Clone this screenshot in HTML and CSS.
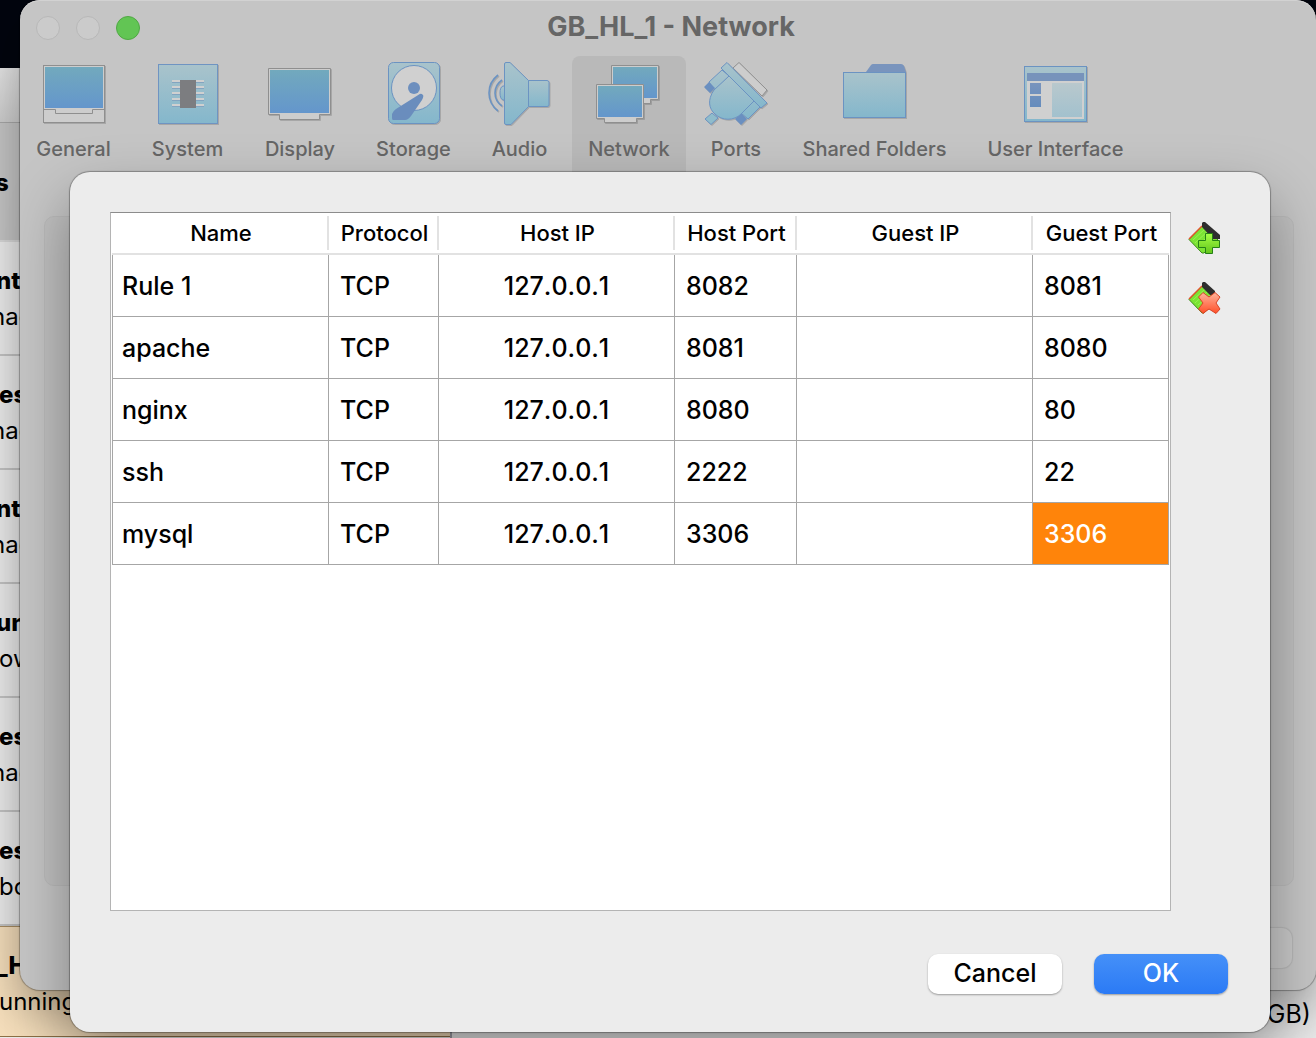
FILE: index.html
```html
<!DOCTYPE html>
<html lang="en">
<head>
<meta charset="utf-8">
<title>GB_HL_1 - Network</title>
<link rel="stylesheet" href="styles.css">
</head>
<body>
<div class="desktop">

  <div class="manager">
    <div class="manager-toolbar"></div>
    <ul class="machines">
      <li class="machine machine-tools"><b>s</b></li>
      <li class="machine"><b>nt</b><span>nac</span></li>
      <li class="machine machine-e"><b>es</b><span>nac</span></li>
      <li class="machine"><b>ntu</b><span>nac</span></li>
      <li class="machine"><b>un</b><span class="flush">ow</span></li>
      <li class="machine machine-e"><b>es</b><span>nac</span></li>
      <li class="machine machine-e"><b>es</b><span class="flush">bo</span></li>
      <li class="machine machine-selected"><b>_H</b><span class="flush">unning</span></li>
    </ul>
    <div class="manager-status">GB)</div>
  </div>

  <div class="settings">
    <header class="titlebar">
      <div class="lights">
        <button class="light" aria-label="Close"></button>
        <button class="light" aria-label="Minimize"></button>
        <button class="light light-zoom" aria-label="Zoom"></button>
      </div>
      <h1 class="title">GB_HL_1 - Network</h1>
    </header>

    <nav class="tabs">
      <button class="tab">
        <svg class="icon" viewBox="0 0 64 64">
          <defs>
            <linearGradient id="screen" x1="0" y1="0" x2="0" y2="1"><stop offset="0" stop-color="#72a9bd"/><stop offset="1" stop-color="#6496cc"/></linearGradient>
            <linearGradient id="pale" x1="0" y1="0" x2="0" y2="1"><stop offset="0" stop-color="#a9c3cb"/><stop offset="1" stop-color="#84b7cc"/></linearGradient>
            <linearGradient id="dark" x1="0" y1="0" x2="0" y2="1"><stop offset="0" stop-color="#7994bd"/><stop offset="1" stop-color="#658cbd"/></linearGradient>
          </defs>
          <rect x="1.5" y="3.5" width="61" height="57" fill="#cdcdcd" stroke="#8f8f8f"/>
          <rect x="3" y="5" width="58" height="41" fill="url(#screen)"/>
          <path d="M2 47.500H13.500V51.500H50.500V47.500H62" fill="none" stroke="#8f8f8f"/>
        </svg>
        <span>General</span>
      </button>
      <button class="tab">
        <svg class="icon" viewBox="0 0 64 64">
          <rect x="2.500" y="2.500" width="59" height="59" fill="url(#pale)" stroke="#6f94c2"/>
          <path d="M16 19H48M16 25H48M16 31H48M16 37H48M16 43H48" stroke="#d0d0d0" stroke-width="2"/>
          <path d="M16 20.500H48M16 26.500H48M16 32.500H48M16 38.500H48M16 44.500H48" stroke="#83a4c0"/>
          <rect x="24" y="18" width="16" height="28" fill="#7c7d80"/>
        </svg>
        <span>System</span>
      </button>
      <button class="tab">
        <svg class="icon" viewBox="0 0 64 64">
          <path d="M.5 6.500H62.500V52.500H51.500V57.500H11.500V52.500H.5Z" fill="#cdcdcd" stroke="#8f8f8f"/>
          <rect x="2" y="8" width="59" height="43" fill="url(#screen)"/>
        </svg>
        <span>Display</span>
      </button>
      <button class="tab">
        <svg class="icon" viewBox="0 0 64 64">
          <rect x="6.500" y=".5" width="51" height="61" rx="5" fill="url(#pale)" stroke="#6b93c2"/>
          <circle cx="32" cy="26" r="22.500" fill="#d0d0d0" stroke="#6b93c2"/>
          <circle cx="32" cy="26" r="6" fill="#6d8fbe"/>
          <path d="M37 32.500Q39 31 41 33Q42 34 40 38L29 54Q26 58 23 58H11Q10 58 10 56V52Q11 49 14 47Z" fill="#6a8dbd"/>
        </svg>
        <span>Storage</span>
      </button>
      <button class="tab">
        <svg class="icon" viewBox="0 0 64 64">
          <path d="M16 24H15Q12 25 12 31Q12 37 15 38H16" fill="url(#pale)" stroke="#6b93c2"/>
          <path d="M10 13Q1 20 1 31T10 49M14 18Q7 23 7 31T14 44" fill="none" stroke="#6b93c2" stroke-width="1.600"/>
          <path d="M18 .5H22L40.500 18.500V44.500L23 62.500H18Q16.500 62.500 16.500 61V2Q16.500 .5 18 .5Z" fill="url(#pale)" stroke="#6b93c2"/>
          <path d="M40.500 18.500H59Q61 18.500 61 20.500V43Q61 44.500 59 44.500H40.500Z" fill="url(#pale)" stroke="#6b93c2"/>
        </svg>
        <span>Audio</span>
      </button>
      <button class="tab tab-current" aria-current="page">
        <svg class="icon" viewBox="0 0 64 64">
          <path d="M14.500 3.500H61.500V37.500H53.500V41.500H30V37.500H14.500Z" fill="#cdcdcd" stroke="#8f8f8f"/>
          <rect x="16" y="5" width="44" height="31" fill="url(#screen)"/>
          <path d="M-.5 22.500H46.500V56.500H39.500V60.500H7.500V56.500H-.5Z" fill="#cdcdcd" stroke="#8f8f8f"/>
          <rect x="1" y="24" width="44" height="31" fill="url(#screen)"/>
        </svg>
        <span>Network</span>
      </button>
      <button class="tab">
        <svg class="icon" viewBox="0 0 64 64" stroke-linejoin="round">
          <path d="M35 .5L63 28L58 34L29 6Z" fill="#cdcdcd" stroke="#8f8f8f"/>
          <path d="M18 8L25 14L11 28L5 20ZM50 39L56 45L44 57L37 51Z" fill="url(#pale)" stroke="#6b93c2"/>
          <path d="M5 20L11 26L6 31L0 25ZM37 51L43 57L37 63L31 57Z" fill="#6a8fc0"/>
          <path d="M25 14L10 28C3 38 5 47 11 52C18 59 30 59 37 52L50 39Z" fill="url(#pale)" stroke="#6b93c2"/>
          <path d="M8 51L14 56L7 62.500L1 57Z" fill="#8fbccb" stroke="#6b93c2"/>
          <path d="M23 .5L63 41L57 46L17 6Z" fill="url(#pale)" stroke="#6b93c2"/>
        </svg>
        <span>Ports</span>
      </button>
      <button class="tab">
        <svg class="icon" viewBox="0 0 64 64">
          <path d="M23 10L28 3Q29 2 30 2H58Q60 2 61 4L63 10Z" fill="#7994bd"/>
          <rect x=".5" y="10.500" width="62" height="45" fill="url(#pale)" stroke="#6b93c2"/>
        </svg>
        <span>Shared Folders</span>
      </button>
      <button class="tab">
        <svg class="icon" viewBox="0 0 64 64">
          <rect x=".5" y="4.500" width="62" height="55" fill="url(#pale)" stroke="#6b93c2"/>
          <rect x="3" y="11" width="57" height="8" fill="#7793bb"/>
          <rect x="3" y="19" width="57" height="38" fill="#d0d0d0"/>
          <path d="M6 21H17V32H6ZM6 34H17V45H6Z" fill="url(#dark)"/>
          <rect x="28" y="21" width="30" height="34" fill="url(#pale)" opacity=".6"/>
        </svg>
        <span>User Interface</span>
      </button>
    </nav>

    <div class="group"></div>
    <div class="settings-actions"><button class="ghost-button" aria-label="OK"></button></div>
  </div>

  <section class="dialog" role="dialog" aria-label="Port forwarding rules">
    <div class="dialog-main">
      <div class="rules-frame">
        <table class="rules">
          <colgroup><col class="c-name"><col class="c-protocol"><col class="c-ip"><col class="c-host-port"><col class="c-ip"><col class="c-guest-port"></colgroup>
          <thead>
            <tr><th><span>Name</span></th><th><span>Protocol</span></th><th><span>Host IP</span></th><th><span>Host Port</span></th><th><span>Guest IP</span></th><th><span>Guest Port</span></th></tr>
          </thead>
          <tbody>
            <tr><td>Rule 1</td><td>TCP</td><td class="ip">127.0.0.1</td><td>8082</td><td class="ip"></td><td>8081</td></tr>
            <tr><td>apache</td><td>TCP</td><td class="ip">127.0.0.1</td><td>8081</td><td class="ip"></td><td>8080</td></tr>
            <tr><td>nginx</td><td>TCP</td><td class="ip">127.0.0.1</td><td>8080</td><td class="ip"></td><td>80</td></tr>
            <tr><td>ssh</td><td>TCP</td><td class="ip">127.0.0.1</td><td>2222</td><td class="ip"></td><td>22</td></tr>
            <tr><td>mysql</td><td>TCP</td><td class="ip">127.0.0.1</td><td>3306</td><td class="ip"></td><td class="selected">3306</td></tr>
          </tbody>
        </table>
      </div>
      <div class="rule-tools">
        <button class="tool" aria-label="Add rule">
          <svg viewBox="0 0 34 34">
            <defs>
              <linearGradient id="green" x1="0" y1="0" x2="0" y2="1"><stop offset="0" stop-color="#a5ff45"/><stop offset="1" stop-color="#63c51c"/></linearGradient>
              <linearGradient id="red" x1="0" y1="0" x2="0" y2="1"><stop offset="0" stop-color="#ffb49c"/><stop offset="1" stop-color="#ff4f28"/></linearGradient>
            </defs>
            <path d="M2 17.500L16 3L31 17L17 31H15Z" fill="#7be334" stroke="#3d8a1b"/>
            <path d="M6 18L18 7M8 21L21 9M11 23L24 12M13 26L27 14" stroke="#9af052"/>
            <path d="M2 17L15 4" stroke="#e2542a" stroke-width="1.500"/>
            <path d="M16 0H18L33 13V17H26L15 5V1Z" fill="#2e2e2e"/>
            <path d="M18.500 11.500H25.500V18.500H32.500V25.500H25.500V31.500H18.500V25.500H11.500V18.500H18.500Z" fill="url(#green)" stroke="#258116"/>
          </svg>
        </button>
        <button class="tool" aria-label="Remove rule">
          <svg viewBox="0 0 34 34">
            <path d="M2 17.500L16 3L31 17L17 31H15Z" fill="#7be334" stroke="#3d8a1b"/>
            <path d="M6 18L18 7M8 21L21 9M11 23L24 12M13 26L27 14" stroke="#9af052"/>
            <path d="M2 17L15 4" stroke="#e2542a" stroke-width="1.500"/>
            <path d="M16 0H18L28 9V13H23L15 5V1Z" fill="#2e2e2e"/>
            <path d="M16 10.500L22 15L28 10.500L33 15L29 21L33 27L29 31.500L22 27L16 31.500L11.500 27L16 21L11.500 15Z" fill="url(#red)" stroke="#d84426" stroke-linejoin="round"/>
          </svg>
        </button>
      </div>
    </div>
    <div class="dialog-actions">
      <button class="button">Cancel</button>
      <button class="button button-default">OK</button>
    </div>
  </section>
</div>
</body>
</html>
```
FILE: styles.css
```css
* { box-sizing: border-box; }

body {
  margin: 0;
  font-family: Inter, "Liberation Sans", sans-serif;
  color: #000;
}

button {
  border: 0;
  padding: 0;
  background: none;
  font: inherit;
  color: inherit;
}

.desktop {
  position: relative;
  min-height: 100vh;
  overflow: hidden;
  background: #02050e;
}

/* Machine list window, mostly covered */
.manager {
  position: absolute;
  inset: 68px 0 0 0;
  display: grid;
  grid-template: 55px 1fr / 450px 1fr;
  background: #ececec;
}

.manager-toolbar {
  grid-column: 1 / -1;
  background: linear-gradient(#e6e6e6, #cfcfcf);
  border-bottom: 1px solid #a8a8a8;
}

.machines {
  margin: 0;
  padding: 0;
  list-style: none;
  font-size: 24px;
  line-height: 36px;
  white-space: nowrap;
}

.machine {
  display: flex;
  flex-direction: column;
  height: 114px;
  padding-top: 21px;
  border-bottom: 2px solid #c4c4c4;
  text-indent: -4px;
}

.machine b { font-weight: 800; }

.machine span { text-indent: -9px; }

.machine .flush { text-indent: -1px; }

.machine-e { text-indent: -1px; }

.machine-tools {
  height: 119px;
  padding-top: 42px;
  background: #c6c6c6;
  border-color: #d8d8d8;
  text-indent: -5px;
}

.machine-selected {
  height: 111px;
  border-top: 1px solid #a98d63;
  border-bottom: 1px solid #8f7146;
  background: #f6dfbc;
}

.manager-status {
  align-self: end;
  padding: 0 5px 6px;
  border-left: 2px solid #a0a0a8;
  font-size: 25px;
  line-height: 36px;
  text-align: right;
}

/* Settings window */
.settings {
  position: absolute;
  inset: 0 0 48px 20px;
  display: flex;
  flex-direction: column;
  border-radius: 20px;
  background: #c5c5c5;
  box-shadow: 0 0 1px 1px rgba(0, 0, 0, .3), 0 20px 50px rgba(0, 0, 0, .35), inset 0 1px #d2d2d2;
}

.titlebar {
  display: grid;
  grid-template-columns: 1fr auto 1fr;
  align-items: center;
  height: 56px;
  padding: 0 10px 0 16px;
}

.lights {
  display: flex;
  gap: 16px;
}

.light {
  width: 24px;
  height: 24px;
  border: 1px solid #b8b8b8;
  border-radius: 50%;
  background: #cbcbcb;
}

.light-zoom {
  background: #62c554;
  border-color: #50a844;
}

.title {
  margin: 0;
  padding-bottom: 2px;
  color: #666;
  font-size: 27px;
  line-height: 30px;
  font-weight: 700;
}

.tabs {
  display: grid;
  grid-template-columns: 107px 105px 104px 107px 89px 114px 84px 177px 169px;
  gap: 8px;
}

.tab {
  display: flex;
  flex-direction: column;
  align-items: center;
  gap: 10px;
  height: 116px;
  padding-top: 6px;
  border-radius: 8px 8px 0 0;
  color: #666;
  font-size: 20px;
  line-height: 26px;
  font-weight: 500;
  white-space: nowrap;
}

.tab-current { background: #b9b9b9; }

.icon {
  width: 64px;
  height: 64px;
  overflow: visible;
  filter: drop-shadow(1px 1px 0 rgba(0, 0, 0, .15));
}

.group {
  flex: 1;
  margin: 44px 22px 42px 24px;
  border: 1px solid #bababa;
  border-radius: 10px;
  background: #c0c0c0;
}

.settings-actions {
  display: flex;
  justify-content: flex-end;
  padding: 0 24px 22px;
}

.ghost-button {
  width: 134px;
  height: 40px;
  border-radius: 10px;
  background: #c9c9c9;
  box-shadow: 0 0 1px 1px rgba(0, 0, 0, .08);
}

/* Port forwarding sheet */
.dialog {
  position: absolute;
  inset: 172px 46px 6px 70px;
  display: flex;
  flex-direction: column;
  gap: 43px;
  padding: 40px 42px 38px 40px;
  border-radius: 20px;
  background: #ececec;
  box-shadow: 0 0 1px 1px rgba(0, 0, 0, .3), 0 28px 60px rgba(0, 0, 0, .36);
}

.dialog-main {
  flex: 1;
  display: flex;
  gap: 16px;
}

.rules-frame {
  flex: 1;
  padding: 0 1px;
  border: 1px solid #b4b4b4;
  border-top-color: #8c8c8c;
  background: #fff;
}

.rules {
  width: 100%;
  table-layout: fixed;
  border-collapse: separate;
  border-spacing: 0;
}

.c-name { width: 217px; }
.c-protocol { width: 110px; }
.c-host-port { width: 122px; }
.c-guest-port { width: 136px; }

.rules th {
  height: 42px;
  padding: 3px 0;
  border-bottom: 2px solid #e2e2e2;
  font-size: 22px;
  line-height: 34px;
  font-weight: 500;
  white-space: nowrap;
}

.rules th span {
  display: block;
  border-right: 2px solid #e2e2e2;
  padding-left: 3px;
}

.rules th:last-child span { border-right-color: transparent; }

.rules td {
  height: 62px;
  padding: 0 11px;
  border-right: 1px solid #a6a6a6;
  border-bottom: 1px solid #a6a6a6;
  font-size: 25px;
  line-height: 32px;
  font-weight: 500;
}

.rules td:first-child {
  padding-left: 9px;
  border-left: 1px solid #a6a6a6;
}

.rules .ip {
  text-align: center;
  font-kerning: none;
}

.rules .selected {
  background: #ff840a;
  color: #fff;
}

.rule-tools {
  display: flex;
  flex-direction: column;
  gap: 26px;
  width: 41px;
  padding-top: 10px;
}

.tool,
.tool svg {
  display: block;
  width: 34px;
  height: 34px;
}

.dialog-actions {
  display: flex;
  justify-content: flex-end;
  gap: 32px;
}

.button {
  width: 134px;
  height: 40px;
  padding-bottom: 2px;
  border-radius: 10px;
  background: #fff;
  box-shadow: 0 1px 2px rgba(0, 0, 0, .35);
  font-size: 25px;
  line-height: 32px;
  font-weight: 500;
}

.button-default {
  background: linear-gradient(#4590f8, #2b7af5);
  color: #fff;
}
```
